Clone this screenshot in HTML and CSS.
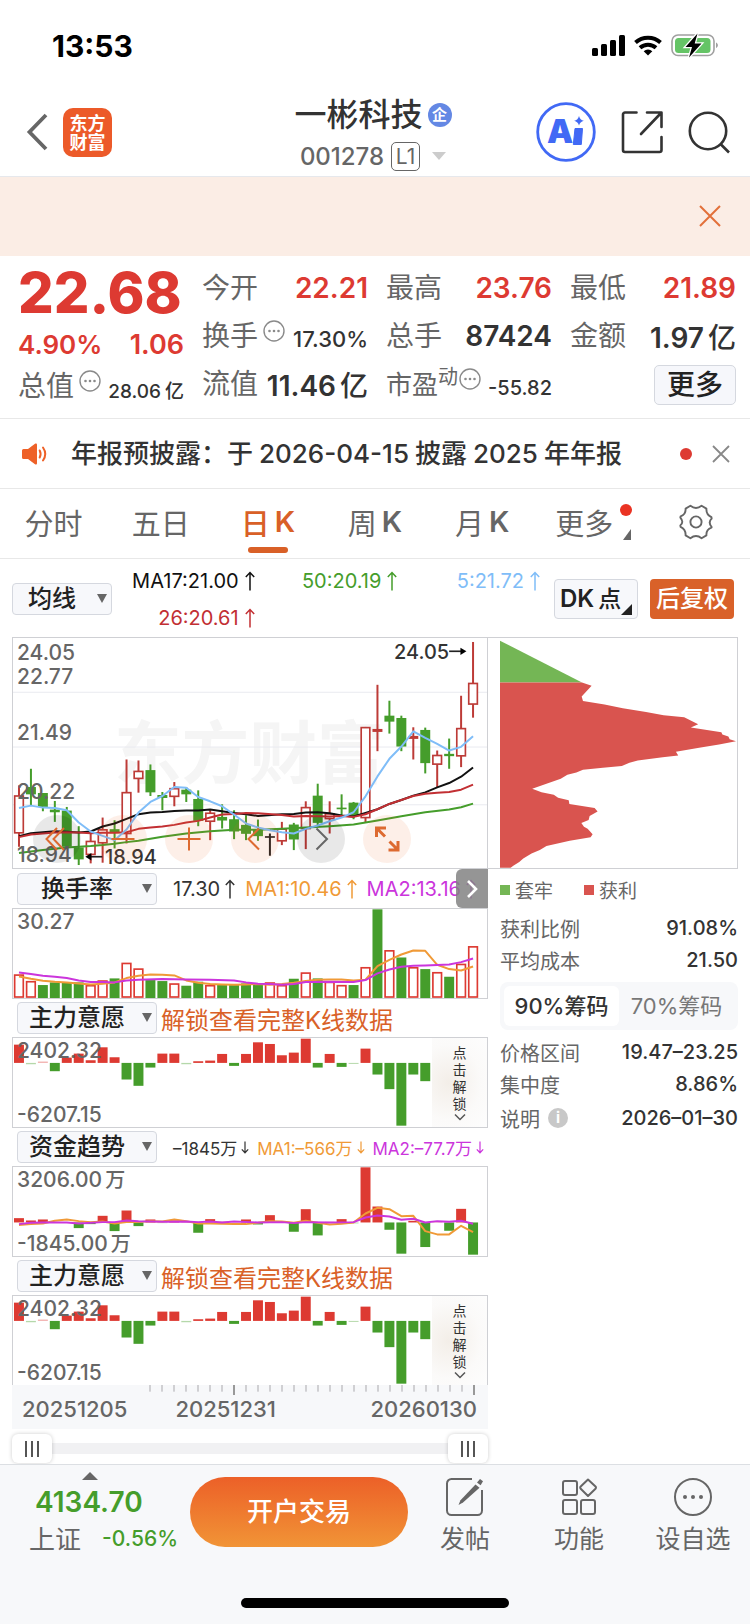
FILE: index.html
```html
<!DOCTYPE html>
<html lang="zh-CN">
<head>
<meta charset="utf-8">
<meta name="viewport" content="width=device-width, initial-scale=1">
<title>一彬科技 001278</title>
<link rel="stylesheet" href="styles.css">
</head>
<body>
<svg class="defs" aria-hidden="true">
  <symbol id="up" viewBox="0 0 10 20"><path d="M5 19.500V1.500M.8 6 5 1.500 9.200 6" fill="none" stroke="currentColor" stroke-width="1.500"/></symbol>
  <symbol id="down" viewBox="0 0 10 20"><path d="M5 3v14M1 13l4 4.200L9 13" fill="none" stroke="currentColor" stroke-width="1.500"/></symbol>
  <symbol id="dots" viewBox="0 0 22 22"><circle cx="11" cy="11" r="10" fill="none" stroke="#8a8a8a" stroke-width="1.400"/><g fill="#8a8a8a"><circle cx="6.500" cy="11" r="1.300"/><circle cx="11" cy="11" r="1.300"/><circle cx="15.500" cy="11" r="1.300"/></g></symbol>
</svg>

<div class="status">
  <time>13:53</time>
  <svg width="130" height="26" viewBox="0 0 130 26" aria-hidden="true">
    <rect x="1" y="15" width="6" height="8" rx="1.500"/><rect x="10" y="11" width="6" height="12" rx="1.500"/><rect x="19" y="7" width="6" height="16" rx="1.500"/><rect x="28" y="2" width="6" height="21" rx="1.500"/>
    <g fill="none" stroke="#000" stroke-width="4"><path d="M44.500 9.500a18.500 18.500 0 0 1 25 0"/><path d="M49 14.800a12 12 0 0 1 16 0"/></g>
    <path d="M57 22.500l-4.300-4.300a6.200 6.200 0 0 1 8.600 0z"/>
    <rect x="81" y="2" width="42" height="20.500" rx="6" fill="none" stroke="#a0a0a0" stroke-width="1.600"/>
    <rect x="84" y="5" width="35.500" height="15" rx="3.500" fill="#65c466"/>
    <path d="M125 9.500c2.600 1 2.600 4.500 0 5.500z" fill="#a0a0a0"/>
    <path d="M106.500.5 94.500 14h6.500l-3 10.500L110.500 10.500h-6.800z" stroke="#fff" stroke-width="2.600" paint-order="stroke"/>
  </svg>
</div>

<header class="head">
  <div class="head-left">
    <button class="plain" aria-label="返回"><svg width="22" height="38" viewBox="0 0 22 38"><path d="M20 2 3.500 19 20 36" fill="none" stroke="#666" stroke-width="3.800"/></svg></button>
    <a class="logo" href="#">东方<br>财富</a>
  </div>
  <div class="head-mid">
    <h1>一彬科技<span class="corp">企</span></h1>
    <div class="code"><span>001278</span><span class="lv">L1</span><i class="caret"></i></div>
  </div>
  <div class="head-right">
    <button class="plain" aria-label="Ai"><svg width="60" height="60" viewBox="0 0 60 60"><circle cx="30" cy="30" r="28.300" fill="none" stroke="#4169f5" stroke-width="2.800"/><text x="11" y="41" class="ai">A</text><path d="M39 26.500h7.500l-1.200 16h-8z" fill="#4169f5" stroke="#4169f5" stroke-linejoin="round"/><path d="M43 14q1 4 4.800 4.800-3.800 1-4.800 4.800-1-3.800-4.800-4.800Q42 18 43 14z" fill="#4169f5"/></svg></button>
    <button class="plain" aria-label="分享"><svg width="42" height="44" viewBox="0 0 42 44"><g fill="none" stroke="#333" stroke-width="2.600" stroke-linecap="round" stroke-linejoin="round"><path d="M15.500 2.500H4a2 2 0 0 0-2 2V40a2 2 0 0 0 2 2h34.500a2 2 0 0 0 2-2V27"/><path d="M26 2.500h14.500V17M40 3 20 24"/></g></svg></button>
    <button class="plain" aria-label="搜索"><svg width="42" height="44" viewBox="0 0 42 44"><g fill="none" stroke="#333" stroke-width="2.600"><circle cx="20" cy="21" r="18.200"/><path d="M32.500 34 41 42.500"/></g></svg></button>
  </div>
</header>

<div class="banner"><button class="plain" aria-label="关闭"><svg width="22" height="22" viewBox="0 0 22 22"><path d="M1 1l20 20M21 1 1 21" stroke="#e2703a" stroke-width="2"/></svg></button></div>

<section class="quote">
  <div class="price">
    <strong>22.68</strong>
    <div class="chg"><span>4.90%</span><span class="abs">1.06</span></div>
    <div class="cell"><span>总值</span><svg class="more-dots"><use href="#dots"/></svg><b class="xs total">28.06<em>亿</em></b></div>
  </div>
  <div class="cells">
    <div class="cell"><span>今开</span><b class="red">22.21</b></div>
    <div class="cell"><span>最高</span><b class="red">23.76</b></div>
    <div class="cell"><span>最低</span><b class="red">21.89</b></div>
    <div class="cell"><span>换手</span><svg class="more-dots"><use href="#dots"/></svg><b class="sm">17.30%</b></div>
    <div class="cell"><span>总手</span><b>87424</b></div>
    <div class="cell"><span>金额</span><b>1.97<em>亿</em></b></div>
    <div class="cell"><span>流值</span><b>11.46<em>亿</em></b></div>
    <div class="cell pe"><span>市盈<sup>动</sup></span><svg class="more-dots"><use href="#dots"/></svg><b class="xs">-55.82</b></div>
    <div class="cell end"><button class="more">更多</button></div>
  </div>
</section>

<section class="notice">
  <svg width="28" height="24" viewBox="0 0 28 24"><path d="M1 8.500A1.500 1.500 0 0 1 2.500 7H7l7-5.300c1-.7 2-.2 2 1v18.600c0 1.200-1 1.700-2 1L7 17H2.500A1.500 1.500 0 0 1 1 15.500z" fill="#ee6128"/><path d="M18.700 8.500q1.800 3.500 0 7M22 5.500q4.500 6.500 0 13" fill="none" stroke="#ee6128" stroke-width="2" stroke-linecap="round"/></svg>
  <p>年报预披露：于<span>2026-04-15</span>披露<span>2025</span>年年报</p>
  <i class="dot"></i>
  <button class="plain" aria-label="关闭"><svg width="18" height="18" viewBox="0 0 18 18"><path d="M1 1l16 16M17 1 1 17" stroke="#888" stroke-width="1.800"/></svg></button>
</section>

<nav class="tabs">
  <button>分时</button><button>五日</button><button class="on">日<b>K</b></button><button>周<b>K</b></button><button>月<b>K</b></button>
  <button><span class="has-more">更多</span></button>
  <button aria-label="设置"><svg width="38" height="38" viewBox="-17 -17 34 34"><path d="M-5-14.500Q0-10.500 5-14.500L9.300-12Q9-6.500 13.800-4.300L14-3Q10.500 0 14 4.500L13.800 5Q9 6.500 9.300 12L5 14.500Q0 10.500-5 14.500L-9.300 12Q-9 6.500-13.800 4.300L-14 3Q-10.500 0-14-4L-13.800-5Q-9-6.500-9.300-12z" fill="none" stroke="#666" stroke-width="1.700" stroke-linejoin="round"/><circle r="5" fill="none" stroke="#666" stroke-width="1.700"/></svg></button>
</nav>

<section class="averages">
  <label class="pick"><select aria-label="均线"><option>均线</option></select></label>
  <div class="ma-grid">
    <span>MA17:21.00<svg class="arr"><use href="#up"/></svg></span>
    <span class="c-green">50:20.19<svg class="arr"><use href="#up"/></svg></span>
    <span class="c-blue">5:21.72<svg class="arr"><use href="#up"/></svg></span>
    <span class="c-red">26:20.61<svg class="arr"><use href="#up"/></svg></span>
  </div>
  <button class="tool dk">DK<b>点</b></button>
  <button class="tool fq">后复权</button>
</section>

<main class="main">
  <div class="left">
    <div class="chart kline">
      <svg id="kline" viewBox="36 21 1428 693"></svg>
      <span class="lab y1">24.05</span><span class="lab y2">22.77</span><span class="lab y3">21.49</span><span class="lab y4">20.22</span><span class="lab y5">18.94</span>
      <div class="pads">
        <button class="gray" aria-label="最左"><svg viewBox="0 0 48 48"><path d="M24 13 13.500 24 24 35M31 13 20.500 24 31 35"/></svg></button>
        <button aria-label="缩小"><svg viewBox="0 0 48 48"><path d="M12.500 24h23"/></svg></button>
        <button aria-label="放大"><svg viewBox="0 0 48 48"><path d="M12.500 24h23M24 12.500v23"/></svg></button>
        <button aria-label="左移"><svg viewBox="0 0 48 48"><path d="M28 13.500 17.500 24 28 34.500"/></svg></button>
        <button class="gray dark" aria-label="右移"><svg viewBox="0 0 48 48"><path d="M19.500 13.500 30 24 19.500 34.500"/></svg></button>
        <button class="full" aria-label="全屏"><svg viewBox="0 0 48 48"><path d="M13.500 22V13H23M13.500 13l8.500 8.500M35 26v9H25.500M35 35l-8.500-8.500"/></svg></button>
      </div>
    </div>

    <div class="ind first">
      <label class="pick"><select aria-label="指标一"><option>换手率</option></select></label>
      <div class="vals">
        <span>17.30<svg class="arr"><use href="#up"/></svg></span>
        <span class="c-orange">MA1:10.46<svg class="arr"><use href="#up"/></svg></span>
        <span class="c-purple">MA2:13.16<svg class="arr"><use href="#up"/></svg></span>
      </div>
      <button class="fold" aria-label="收起"><svg width="12" height="20" viewBox="0 0 12 20"><path d="M2 2l8 8-8 8" fill="none" stroke="#fff" stroke-width="2.600"/></svg></button>
    </div>
    <div class="chart small-chart"><svg id="turnover" viewBox="36 116 1428 268" preserveAspectRatio="none"></svg><span class="lab top">30.27</span></div>

    <div class="ind">
      <label class="pick"><select aria-label="指标二"><option>主力意愿</option></select></label>
      <a class="unlock" href="#">解锁查看完整K线数据</a>
    </div>
    <div class="chart small-chart"><svg class="will" viewBox="36 503 1428 268" preserveAspectRatio="none"></svg><span class="lab top">2402.32</span><span class="lab low">-6207.15</span>
      <button class="gate"><span>点击解锁</span><svg width="12" height="8" viewBox="0 0 12 8"><path d="M1 1.500l5 5 5-5" fill="none" stroke="#555" stroke-width="1.500"/></svg></button></div>

    <div class="ind">
      <label class="pick"><select aria-label="指标三"><option>资金趋势</option></select></label>
      <div class="vals small">
        <span>–1845万<svg class="arr"><use href="#down"/></svg></span>
        <span class="c-orange">MA1:–566万<svg class="arr"><use href="#down"/></svg></span>
        <span class="c-purple">MA2:–77.7万<svg class="arr"><use href="#down"/></svg></span>
      </div>
    </div>
    <div class="chart small-chart"><svg id="funds" viewBox="36 80 1428 268" preserveAspectRatio="none"></svg><span class="lab top">3206.00<em>万</em></span><span class="lab low">-1845.00<em>万</em></span></div>

    <div class="ind">
      <label class="pick"><select aria-label="指标四"><option>主力意愿</option></select></label>
      <a class="unlock" href="#">解锁查看完整K线数据</a>
    </div>
    <div class="chart small-chart open"><svg class="will" viewBox="36 503 1428 268" preserveAspectRatio="none"></svg><span class="lab top">2402.32</span><span class="lab low">-6207.15</span>
      <button class="gate"><span>点击解锁</span><svg width="12" height="8" viewBox="0 0 12 8"><path d="M1 1.500l5 5 5-5" fill="none" stroke="#555" stroke-width="1.500"/></svg></button></div>

    <div class="axis">
      <svg id="ticks" viewBox="36 0 1428 30"></svg>
      <div class="dates"><span>20251205</span><span>20251231</span><span>20260130</span></div>
    </div>
    <div class="range">
      <input type="range" min="0" max="100" value="0" aria-label="起始日期">
      <input type="range" min="0" max="100" value="100" aria-label="结束日期">
    </div>
  </div>

  <aside class="right">
    <div class="chips"><svg viewBox="30 21 714 693">
      <path d="M30 29 277 155H30z" fill="#74b655"/>
      <path d="M30 155H277L306 165 276 197 280 211 345 221 400 233 470 244 523 254 585 260 627 281 605 291 697 305 700 312 718 318 722 326 741 332 690 342 630 352 560 364 567 375 520 380 445 390 420 397 397 407 340 412 280 418 260 426 233 433 213 445 170 460 127 475 155 486 192 493 205 502 237 510 239 521 315 533 324 544 300 557 297 569 275 578 283 590 294 596 309 612 303 621 240 632 170 648 150 660 125 670 100 685 88 696 70 707 62 713H30z" fill="#d9544f"/>
    </svg></div>
    <div class="legend"><span class="lg">套牢</span><span class="lr">获利</span></div>
    <dl class="stats">
      <div><dt>获利比例</dt><dd>91.08%</dd></div>
      <div><dt>平均成本</dt><dd>21.50</dd></div>
    </dl>
    <div class="seg"><button class="on">90%筹码</button><button>70%筹码</button></div>
    <dl class="stats">
      <div><dt>价格区间</dt><dd>19.47–23.25</dd></div>
      <div><dt>集中度</dt><dd>8.86%</dd></div>
      <div class="last"><dt>说明<i class="info">i</i></dt><dd>2026–01–30</dd></div>
    </dl>
  </aside>
</main>

<footer class="bar">
  <div class="bar-row">
    <a class="index" href="#"><i></i><b>4134.70</b><span>上证<small>-0.56%</small></span></a>
    <button class="open-acc">开户交易</button>
    <button class="act"><svg width="40" height="40" viewBox="0 0 40 40"><path d="M27 2H6.500A4.500 4.500 0 0 0 2 6.500v27A4.500 4.500 0 0 0 6.500 38h26a4.500 4.500 0 0 0 4.500-4.500V13" fill="none" stroke="#666" stroke-width="2"/><path d="M30.500 7.500l4 3.200L18 25.500l-4.500 2.500 2-4.800z" fill="#666"/><path d="M32 5.500l3-3.500 3 2.300-2.400 4z" fill="#666"/></svg>发帖</button>
    <button class="act"><svg width="40" height="40" viewBox="0 0 40 40"><g fill="none" stroke="#666" stroke-width="2"><rect x="4" y="4" width="14" height="14" rx="2"/><rect x="4" y="23" width="14" height="14" rx="2"/><rect x="22" y="23" width="14" height="14" rx="2"/><path d="M29 2.500l7.500 7a1.500 1.500 0 0 1 0 2.200L29 19l-7.300-7.300a1.500 1.500 0 0 1 0-2.200z" stroke-linejoin="round"/></g></svg>功能</button>
    <button class="act"><svg width="40" height="40" viewBox="0 0 40 40"><circle cx="20" cy="20" r="18" fill="none" stroke="#666" stroke-width="2"/><g fill="#666"><circle cx="12" cy="20" r="2"/><circle cx="20" cy="20" r="2"/><circle cx="28" cy="20" r="2"/></g></svg>设自选</button>
  </div>
  <i class="home"></i>
</footer>
<script src="app.js"></script>
</body>
</html>
```
FILE: styles.css
```css
* { box-sizing: border-box; }
body { margin: 0; background: #fff; color: #333; font-family: Inter, "Noto Sans CJK SC", sans-serif; font-size: 20px; }
button, select { font: inherit; color: inherit; border: 0; background: none; padding: 0; margin: 0; }
a { color: inherit; text-decoration: none; }
svg { display: block; flex: none; }
em, i { font-style: normal; }
h1, p, dl, dd { margin: 0; }
.defs { position: absolute; width: 0; height: 0; }
.plain { display: block; }

.status { display: flex; justify-content: space-between; align-items: center; height: 88px; padding: 3px 29px 0 52px; color: #000; }
.status time { font-size: 30px; font-weight: 700; }

.head { display: grid; grid-template-columns: 1fr auto 1fr; align-items: center; height: 89px; padding: 0 20px 0 16px; border-bottom: 1px solid #e6e8ec; }
.head-left, .head-right { display: flex; align-items: center; }
.head-left { gap: 15px; padding-left: 10px; }
.head-right { justify-content: flex-end; gap: 25px; }
.logo { width: 49px; height: 49px; padding-top: 6px; border-radius: 10px; background: #ec5a29; color: #fff; font-size: 18px; line-height: 19px; font-weight: 700; text-align: center; }
.ai { font: 900 33px Inter, sans-serif; fill: #4169f5; }
.head-mid { display: flex; flex-direction: column; align-items: center; padding-top: 6px; }
.head-mid h1 { display: flex; align-items: center; gap: 5px; font-size: 32px; line-height: 42px; font-weight: 500; }
.corp { width: 24px; height: 24px; border-radius: 50%; background: #6488e4; color: #fff; font-size: 15px; line-height: 23px; text-align: center; font-weight: 700; }
.code { display: flex; align-items: center; height: 40px; font-size: 24px; font-weight: 500; color: #666; }
.lv { margin: 0 12px 0 7px; width: 29px; height: 29px; border: 1px solid #666; border-radius: 5px; font-size: 21px; line-height: 27px; font-weight: 400; text-align: center; }
.caret { border: 7px solid transparent; border-top: 8px solid #ccc; border-bottom: 0; }

.banner { display: flex; justify-content: flex-end; align-items: center; height: 79px; padding: 0 29px 2px 0; background: #fbede5; }

.quote { display: grid; grid-template-columns: 166fr 534fr; column-gap: 18px; padding: 8px 14px 10px 18px; border-bottom: 1px solid #e8e8e8; }
.cells { display: grid; grid-template-columns: repeat(3, 1fr); column-gap: 18px; grid-auto-rows: 48px; }
.cell { display: flex; align-items: center; color: #666; font-size: 28px; white-space: nowrap; }
.cell span { padding-bottom: 4px; }
.cell b { margin-left: auto; font-weight: 600; color: #333; }
.cell em { margin-left: 4px; font-weight: 500; }
.cell .sm { font-size: 22px; font-weight: 500; padding-top: 5px; }
.cell .xs { font-size: 20px; font-weight: 500; padding-top: 7px; }
.cell .total { font-size: 19px; }
.cell .red { color: #dd3a32; }
.cell sup { font-size: 20px; line-height: 20px; vertical-align: 10px; }
.cell.pe { font-size: 26px; }
.end { justify-content: flex-end; }
.more-dots { width: 22px; height: 22px; margin: 0 0 10px 5px; }
.pe .more-dots { margin-left: 1px; }
.more { width: 82px; height: 40px; margin-top: 1px; border: 1px solid #d5d8df; border-radius: 5px; background: #f6f7fb; color: #222; font-size: 28px; line-height: 36px; font-weight: 500; }
.price { color: #dd3a32; }
.price strong { display: block; height: 60px; font-size: 56px; line-height: 59px; font-weight: 800; }
.chg { display: flex; justify-content: space-between; align-items: center; height: 40px; font-size: 26px; font-weight: 600; }
.chg .abs { font-size: 27px; }
.price .cell { height: 44px; }

.notice { display: flex; align-items: center; height: 70px; padding: 0 20px 0 21px; border-bottom: 1px solid #e8e8e8; }
.notice p { margin-left: 22px; flex: 1; padding-bottom: 4px; font-size: 26px; font-weight: 500; white-space: nowrap; }
.notice p span { margin: 0 6px; }
.dot { width: 12px; height: 12px; margin-right: 20px; border-radius: 50%; background: #dd3a32; }

.tabs { display: grid; grid-template-columns: repeat(7, 1fr); height: 70px; border-bottom: 1px solid #e8e8e8; color: #666; font-size: 29px; }
.tabs button { position: relative; display: flex; align-items: center; justify-content: center; padding-bottom: 4px; }
.tabs b { margin-left: 5px; font-weight: 600; }
.tabs .on { color: #d96027; font-weight: 500; }
.tabs .on::after { content: ""; position: absolute; left: 50%; bottom: 5px; width: 40px; height: 6px; margin-left: -20px; border-radius: 3px; background: #d96027; }
.has-more { position: relative; margin-right: 10px; }
.has-more::before { content: ""; position: absolute; right: -19px; top: 3px; width: 12px; height: 12px; border-radius: 50%; background: #ea3323; }
.has-more::after { content: ""; position: absolute; right: -18px; bottom: 3px; border-left: 8px solid transparent; border-bottom: 11px solid #666; }

.averages { display: flex; align-items: flex-start; height: 79px; padding: 0 16px 0 12px; }
.pick { position: relative; display: block; flex: none; }
.pick select { display: block; width: 100%; height: 32px; border: 1px solid #d5d8df; border-radius: 4px; background: #f7f8fb; appearance: none; color: #222; font-size: 24px; line-height: 26px; font-weight: 500; text-align: center; padding-right: 20px; }
.pick::after { content: ""; position: absolute; right: 5px; top: 11px; border: 5px solid transparent; border-top: 9px solid #666; border-bottom: 0; pointer-events: none; }
.averages .pick { width: 100px; margin-top: 24px; }
.ma-grid { flex: 1; display: grid; grid-template-columns: repeat(3, 1fr); grid-auto-rows: 37px; padding: 3px 2px 0 0; font-size: 20px; color: #111; }
.ma-grid span { display: flex; align-items: center; justify-content: flex-end; }
.arr { width: 10px; height: 20px; margin-left: 6px; }
.c-green { color: #459d2b; }
.ma-grid .c-blue { color: #7fbdf8; }
.ma-grid .c-red { color: #c22f33; }
.ma-grid .c-green { color: #459d2b; }
.c-orange { color: #f09a37; }
.c-purple { color: #cb35dc; }
.tool { width: 84px; height: 40px; border-radius: 4px; margin: 20px 0 0 12px; font-size: 24px; line-height: 38px; font-weight: 500; color: #222; white-space: nowrap; }
.dk { position: relative; border: 1px solid #d5d8df; background: #f7f8fb; text-align: left; padding-left: 5px; font-weight: 600; }
.dk b { margin-left: 4px; font-weight: 500; font-size: 23px; }
.dk::after { content: ""; position: absolute; right: 5px; bottom: 3px; border-left: 11px solid transparent; border-bottom: 11px solid #222; }
.fq { background: #d96129; color: #fff; }

.main { display: grid; grid-template-columns: 476fr 250fr; padding: 0 12px; }
.chart { position: relative; border: 1px solid #cfd0d4; }
.chart > svg { width: 100%; height: auto; }
.small-chart { height: 91px; }
.small-chart > svg { height: 100%; }
.open { height: 90px; border-bottom: 0; }
.kline, .chips { margin-top: -1px; }
.lab { position: absolute; left: 4px; font-size: 21px; line-height: 24px; font-weight: 500; color: #666; }
.lab em { margin-left: 3px; font-size: 20px; }
.y1 { top: 3px; }
.y2 { top: 27px; }
.y3 { top: 83px; }
.y4 { top: 142px; }
.y5 { top: 205px; }
.top { top: 1px; }
.low { bottom: 0; }
.wm { font: 700 204px "Noto Sans CJK SC", sans-serif; fill: #f5f5f5; }
.note { font: 500 60px Inter, sans-serif; fill: #333; }
.pads { position: absolute; left: 20px; top: 177px; display: flex; gap: 18px; }
.pads button { width: 48px; height: 48px; border-radius: 50%; background: rgba(236, 100, 30, 0.1); }
.pads .gray { background: rgba(0, 0, 0, 0.09); }
.pads path { fill: none; stroke: #dd6a30; stroke-width: 2; }
.pads .dark path { stroke: #666; }
.pads .full path { stroke-width: 3; }

.ind { position: relative; display: flex; align-items: center; height: 38px; padding-left: 5px; }
.first { height: 39px; }
.ind .pick { width: 140px; }
.vals { display: flex; gap: 10px; margin-left: 16px; font-size: 20px; white-space: nowrap; }
.vals span { display: flex; align-items: center; }
.vals .arr { margin-left: 5px; }
.small { font-size: 17px; gap: 8px; }
.small .arr { margin-left: 4px; width: 8px; }
.fold { position: absolute; right: 0; top: 0; width: 32px; height: 39px; display: grid; place-items: center; border-radius: 6px 0 0 6px; background: rgba(130, 130, 130, 0.85); }
.unlock { margin-left: 4px; font-size: 24px; color: #d96128; white-space: nowrap; }
.gate { position: absolute; right: 0; top: 0; bottom: 0; width: 55px; display: flex; flex-direction: column; align-items: center; justify-content: center; gap: 1px; background: radial-gradient(ellipse at 30% 50%, #f3eee8, #fbfaf9 60%, #fdfdfd); color: #333; }
.gate span { width: 14px; font-size: 14px; line-height: 17px; overflow-wrap: anywhere; }
.axis { height: 44px; background: #f7f8fa; }
.axis svg { width: 100%; height: auto; }
.dates { display: flex; gap: 48px; padding: 0 11px 0 10px; font-size: 22px; line-height: 28px; font-weight: 500; color: #666; }
.dates :last-child { margin-left: auto; }
.range { position: relative; height: 35px; }
.range::before { content: ""; position: absolute; left: 0; right: 0; top: 14px; height: 11px; background: #f1f1f3; }
.range input { position: absolute; left: 0; top: 5px; width: 100%; height: 29px; margin: 0; background: none; appearance: none; pointer-events: none; }
.range input::-webkit-slider-thumb { appearance: none; pointer-events: auto; width: 40px; height: 29px; border-radius: 6px; box-shadow: 0 0 4px rgba(0, 0, 0, 0.2); background: linear-gradient(#555, #555) 13px 50% / 2px 16px no-repeat, linear-gradient(#555, #555) 19px 50% / 2px 16px no-repeat, linear-gradient(#555, #555) 25px 50% / 2px 16px no-repeat, #fff; }

.chips { border: 1px solid #cfd0d4; border-left: 0; padding-left: 12px; }
.chips svg { width: 100%; height: auto; }
.legend { display: flex; margin-left: 12px; height: 41px; align-items: center; font-size: 19px; color: #666; }
.legend span { display: flex; align-items: center; gap: 5px; width: 84px; }
.legend span::before { content: ""; width: 10px; height: 10px; background: #74b655; }
.legend .lr::before { background: #d9544f; }
.stats { margin-left: 12px; padding: 2px 0 6px; }
.stats div { display: flex; justify-content: space-between; align-items: center; height: 32px; color: #666; }
.stats .last { height: 36px; }
.stats dt { display: flex; align-items: center; gap: 8px; }
.stats dd { color: #333; font-weight: 500; }
.info { width: 20px; height: 20px; border-radius: 50%; background: #c8c8c8; color: #fff; font-size: 15px; line-height: 20px; font-weight: 700; text-align: center; }
.seg { display: grid; grid-template-columns: 115fr 115fr; margin: 0 0 4px 12px; padding: 4px; height: 48px; border-radius: 8px; background: #f7f8fa; color: #777; font-size: 22px; line-height: 36px; }
.seg .on { border-radius: 6px; background: #fff; color: #333; font-weight: 500; }

.bar { position: relative; height: 160px; background: #f7f8fa; border-top: 1px solid #dcdfe3; }
.bar-row { display: grid; grid-template-columns: 190fr 218fr 114fr 114fr 114fr; padding-top: 12px; color: #666; }
.index { position: relative; display: flex; flex-direction: column; padding-left: 29px; color: #459d2b; }
.index i { position: absolute; left: 82px; top: -5px; border: 8px solid transparent; border-bottom: 8px solid #666; border-top: 0; }
.index b { padding-left: 6px; font-size: 28px; line-height: 34px; margin-top: 8px; font-weight: 600; }
.index span { display: flex; align-items: center; justify-content: space-between; padding-right: 12px; height: 36px; font-size: 26px; color: #666; }
.index small { color: #459d2b; font-size: 21px; font-weight: 500; padding-top: 3px; }
.open-acc { height: 70px; border-radius: 35px; background: linear-gradient(#ec6028, #f19436); color: #fff; font-size: 26px; line-height: 66px; font-weight: 500; }
.act { display: flex; flex-direction: column; align-items: center; font-size: 25px; line-height: 44px; white-space: nowrap; }
.home { position: absolute; left: 50%; bottom: 16px; width: 268px; height: 10px; margin-left: -134px; border-radius: 5px; background: #000; }
```
FILE: app.js
```js
const RED = "#dd3a32", GREEN = "#459d2b", CANDLE = "#bd3b37";
const cx = i => 54 + 36 * i;
const rect = (x, y, w, h, fill, extra = "") => `<rect x="${x}" y="${y}" width="${w}" height="${h}" fill="${fill}" ${extra}/>`;
const hollow = (i, y0, y1, color) => rect(cx(i) - 13, y0 + 2, 26, Math.max(y1 - y0 - 4, 1), "#fff", `stroke="${color}" stroke-width="5"`);

/* A line is a list of y values, one per day; null skips a day. */
const line = (ys, color) => {
  const pts = ys.map((y, i) => y === null ? "" : `${cx(i)},${y}`).join(" ");
  return `<polyline points="${pts}" fill="none" stroke="${color}" stroke-width="6" stroke-linejoin="round"/>`;
};

/* Candles: colour, body top, body bottom, high, low */
const candles = [
  ["r",495,610,465,650],["g",470,492,415,525],["g",488,530,488,543],["g",538,546,512,575],["g",541,650,530,655],
  ["g",652,688,588,705],["r",632,675,600,700],["r",597,640,562,698],["g",597,609,570,655],["r",485,612,387,640],
  ["r",421,446,390,487],["g",419,486,402,497],["g",494,503,485,540],["r",473,500,455,528],["g",478,492,470,515],
  ["g",506,572,480,588],["r",547,575,540,630],["g",560,571,522,595],["g",567,604,540,627],["g",584,611,555,630],
  ["g",598,618,568,632],["k",618,623,610,677],["r",595,634,575,645],["g",583,628,578,660],["r",530,597,513,657],
  ["g",496,578,460,585],["r",549,567,513,610],["g",532,537,492,555],["g",517,557,515,567],["r",289,564,289,578],
  ["f",295,304,162,362],["g",255,273,210,309],["g",262,348,255,362],["f",316,325,290,387],["g",298,398,291,429],
  ["r",373,403,360,470],["g",370,377,324,415],["r",292,378,195,410],["r",156,222,33,261]
];
const colors = { r: CANDLE, f: CANDLE, g: GREEN, k: "#222" };
const N = null;
let k = `<text class="wm" x="340" y="444">东方财富</text>`;
for (const y of [184, 349, 523]) k += rect(36, y - 1, 1428, 3, "#e9eaf0");
candles.forEach(([t, a, b, hi, lo], i) => {
  k += rect(cx(i) - 3, hi, 6, lo - hi, colors[t]);
  k += t === "r" ? hollow(i, a, b, CANDLE) : rect(cx(i) - 15, a, 30, b - a, colors[t]);
});
k += line([618,609,606,603,605,607,604,589,580,566,552,547,545,542,541,541,538,543,548,552,557,N,552,551,547,546,549,556,559,548,537,521,509,496,486,471,458,439,411], "#111");
k += line([621,613,610,607,606,607,609,608,608,606,596,592,589,584,577,572,562,553,551,548,549,N,554,559,557,N,559,557,560,552,537,521,509,497,490,487,485,478,463], "#c22f33");
k += line([669,N,660,N,652,N,648,645,641,636,632,N,620,N,610,N,603,N,599,N,599,N,596,N,592,N,588,N,583,N,571,N,558,N,546,N,538,531,520], "#459d2b");
k += line([533,526,532,533,540,577,604,617,630,598,547,515,497,470,472,500,513,528,553,580,592,600,606,610,596,586,573,562,546,498,438,385,348,302,322,340,360,349,317], "#7fbdf8");
k += `<path d="M305 680H262" stroke="#222" stroke-width="5"/><path d="M254 680l18-11v22z"/><text class="note" x="313" y="701">18.94</text>`;
k += `<path d="M1350 61h42" stroke="#222" stroke-width="5"/><path d="M1402 61l-18-11v22z"/><text class="note" x="1184" y="84">24.05</text>`;
document.getElementById("kline").innerHTML = k;

/* Turnover: top edge of every bar */
const turnover = [
  ["r",313],["r",333],["g",345],["g",337],["g",337],["g",337],["r",345],["r",331],["g",325],["r",278],["r",295],["g",330],["g",333],
  ["r",340],["g",347],["g",335],["r",345],["g",345],["g",345],["g",340],["g",341],["r",337],["r",345],["g",326],["r",307],["g",325],
  ["r",335],["r",345],["g",345],["r",291],["g",117],["r",240],["g",262],["r",291],["g",297],["r",306],["g",320],["r",281],["r",228]
];
let t = turnover.map(([c, y], i) => c === "r" ? hollow(i, y, 383, RED) : rect(cx(i) - 15, y, 30, 384 - y, GREEN)).join("");
t += line([319,326,332,335,337,340,343,341,337,324,317,313,314,316,331,338,342,343,344,343,342,344,342,338,333,329,328,328,331,329,288,269,253,241,242,284,297,301,289], "#f09a37");
t += line([307,312,317,320,324,331,336,336,337,331,329,N,327,N,328,N,329,N,331,337,341,342,344,342,336,N,335,N,336,330,310,298,290,287,286,N,283,276,265], "#cb35dc");
document.getElementById("turnover").innerHTML = t;

/* Bars above (positive) or below (negative) a zero line; thin bars are pale */
const bars = (vals, base) => vals.map((v, i) =>
  rect(cx(i) - 15, v > 0 ? base - v : base, 30, Math.abs(v), v > 0 ? RED : GREEN, Math.abs(v) < 5 ? 'opacity="0.4"' : "")).join("");

const will = bars([55,-4,4,-25,16,28,8,47,17,-50,-69,-14,28,28,-4,5,7,27,-9,27,62,57,23,31,73,-14,27,-12,-3,43,-35,-79,-189,-35,-55], 578);
document.querySelectorAll(".will").forEach(s => { s.innerHTML = will; });

let f = bars([13,6,9,1,0,-17,-5,20,-26,36,-11,9,-2,6,3,-31,10,3,0,9,-6,22,3,-28,40,-39,2,10,-3,166,48,-22,-94,5,-74,3,-25,41,-97], 247);
f += line([255,252,250,242,238,243,246,244,250,246,246,243,244,238,243,250,250,N,252,252,248,243,244,248,242,248,253,251,247,220,203,207,228,227,273,283,283,257,276], "#f09a37");
f += line([252,248,247,N,247,250,N,246,246,241,243,N,245,N,244,246,244,247,244,N,247,N,246,249,246,N,247,N,246,232,226,229,239,236,247,243,245,242,251], "#cb35dc");
document.getElementById("funds").innerHTML = f;

let ticks = "";
for (let i = 11; i < 39; i++) {
  const major = i === 18 || i === 38;
  ticks += rect(cx(i) - 3, 0, 6, major ? 30 : 20, major ? "#999" : "#d0d0d3");
}
document.getElementById("ticks").innerHTML = ticks;
```
